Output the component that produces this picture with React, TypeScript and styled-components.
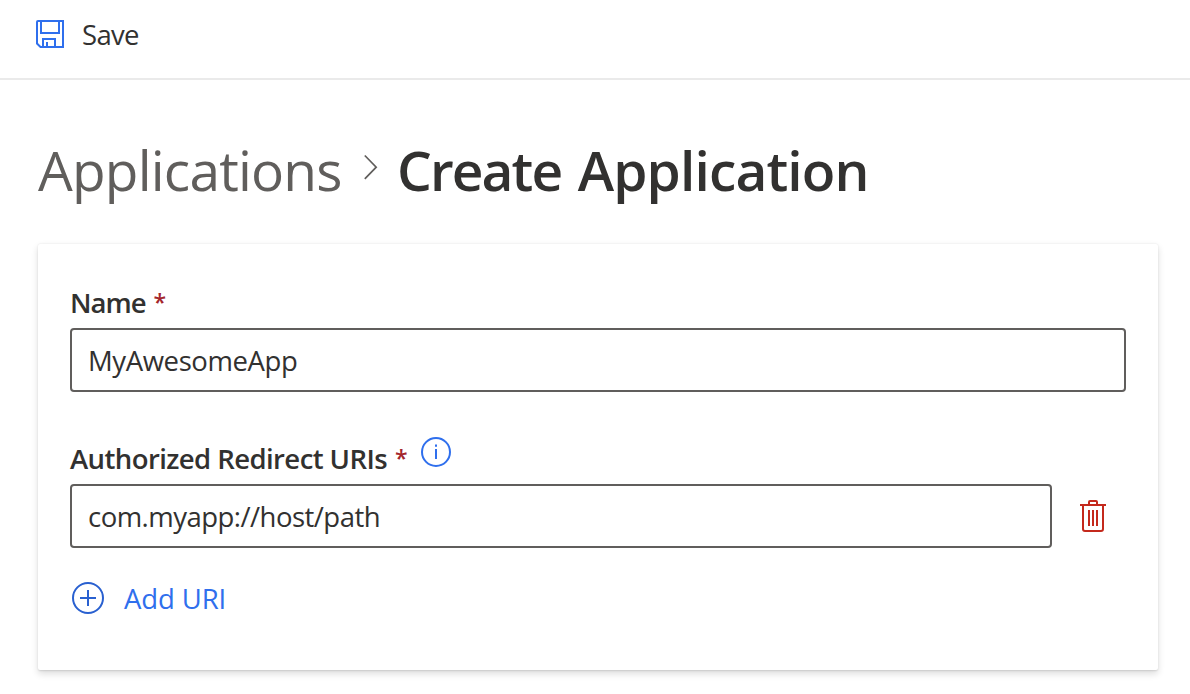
import React from "react";
import styled, { createGlobalStyle } from "styled-components";

const Global = createGlobalStyle`
  * { box-sizing: border-box; }
  body { margin: 0; min-height: 100vh; background: #fff; color: #323130; font-family: "Open Sans", sans-serif; }
`;

const Toolbar = styled.header`
  height: 80px;
  border-bottom: 2px solid #eaeaea;
  padding: 0 0 10px 36px;
  display: flex;
  align-items: center;
`;

const Command = styled.button<{ $gap: number; $tone: string; $track: number }>`
  border: 0;
  background: none;
  padding: 0;
  display: flex;
  align-items: center;
  gap: ${(p) => p.$gap}px;
  font: 400 27.5px/36px "Open Sans", sans-serif;
  letter-spacing: ${(p) => p.$track}px;
  color: ${(p) => p.$tone};
`;

const Caption = styled.span`
  padding-top: 2px;
`;

const Icon = styled.svg`
  display: block;
  flex: none;
  fill: none;
  stroke-width: 2;
`;

const Page = styled.main`
  padding: 54px 32px 24px 38px;
`;

const Breadcrumb = styled.nav`
  display: flex;
  height: 72px;
  margin-bottom: 38px;
  font-size: 55px;
  line-height: 71px;
  white-space: nowrap;
`;

const Parent = styled.span`
  width: 326px;
  color: #605e5c;
  letter-spacing: -0.8px;
`;

const Chevron = styled(Icon)`
  margin: 20px 17px 0 0;
  stroke: #605e5c;
  stroke-width: 1.7;
`;

const Current = styled.span`
  font-weight: 600;
  letter-spacing: -0.85px;
`;

const Tight = styled.span`
  letter-spacing: -1.9px;
  margin-right: 3px;
`;

const Card = styled.form`
  width: 1120px;
  height: 426px;
  padding: 38px 32px;
  background: #fff;
  border-radius: 2px;
  box-shadow: 0 3.2px 7.2px rgba(0, 0, 0, 0.132), 0 0.6px 1.8px rgba(0, 0, 0, 0.108);
`;

const Field = styled.div`
  & + & { margin-top: 46px; }
`;

const Label = styled.label<{ $track: number }>`
  display: flex;
  height: 46px;
  line-height: 42px;
  font-size: 27.5px;
  font-weight: 600;
  letter-spacing: ${(p) => p.$track}px;
`;

const Star = styled.span`
  width: 12px;
  margin-left: 8px;
  font-size: 23px;
  line-height: 40px;
  font-weight: 600;
  color: #a4262c;
`;

const Info = styled(Icon)`
  margin: -1px 0 0 14px;
  stroke: #2f6fed;
`;

const Row = styled.div`
  display: flex;
  align-items: center;
  gap: 28px;
`;

const Input = styled.input<{ $track: number }>`
  flex: 1;
  min-width: 0;
  height: 64px;
  border: 2px solid #605e5c;
  border-radius: 4px;
  padding: 1px 16px 0;
  color: #323130;
  outline: 0;
  font: 400 27.5px/31px "Open Sans", sans-serif;
  letter-spacing: ${(p) => p.$track}px;
`;

const IconButton = styled.button`
  display: block;
  margin-right: 20px;
  padding: 0;
  border: 0;
  background: none;
`;

const Actions = styled.div`
  padding: 31px 0 0 2px;
`;

export default function App() {
  return (
    <>
      <Global />
      <Toolbar>
        <Command $gap={18} $tone="#323130" $track={-0.7}>
          <Icon width="28" height="28" viewBox="0 0 28 28" stroke="#2f6fed">
            <path d="M2 1h25v26H4.500L1 23.500V2a1 1 0 0 1 1-1zM5 1v12h18V1M7 27v-8h12v8M11 27v-5" />
          </Icon>
          <Caption>Save</Caption>
        </Command>
      </Toolbar>
      <Page>
        <Breadcrumb>
          <Parent>Applications</Parent>
          <Chevron width="16" height="28" viewBox="0 0 16 28">
            <path d="M0.800 1.500L12.200 13.200L0.800 24.900" />
          </Chevron>
          <Current>
            <Tight>Create</Tight> Application
          </Current>
        </Breadcrumb>
        <Card>
          <Field>
            <Label $track={-1}>
              Name<Star>*</Star>
            </Label>
            <Row>
              <Input $track={-0.4} defaultValue="MyAwesomeApp" />
            </Row>
          </Field>
          <Field>
            <Label $track={-0.58}>
              Authorized Redirect URIs<Star>*</Star>
              <Info width="30" height="30" viewBox="0 0 30 30">
                <circle cx="15" cy="15" r="14" />
                <path d="M15 12v10M15 7.500v2.200" />
              </Info>
            </Label>
            <Row>
              <Input $track={-0.53} defaultValue="com.myapp://host/path" />
              <IconButton type="button" aria-label="Delete">
                <Icon width="26" height="32" viewBox="0 0 26 32" stroke="#c4291c">
                  <path d="M0 5h26M9 5V2q0-1 1-1h6q1 0 1 1v3M3 5v24q0 2 2 2h16q2 0 2-2V5M9 10v16M13 10v16M17 10v16" />
                </Icon>
              </IconButton>
            </Row>
          </Field>
          <Actions>
            <Command type="button" $gap={20} $tone="#2f6fed" $track={-0.1}>
              <Icon width="32" height="32" viewBox="0 0 32 32" stroke="#2960d0">
                <circle cx="16" cy="16" r="15" />
                <path d="M8 16h16M16 8v16" />
              </Icon>
              <Caption>Add URI</Caption>
            </Command>
          </Actions>
        </Card>
      </Page>
    </>
  );
}
